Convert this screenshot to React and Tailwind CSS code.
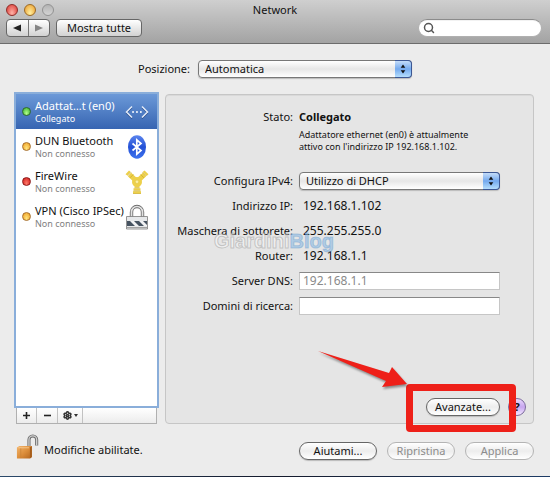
import React, { useState } from 'react';
import { Search, Settings } from 'lucide-react';

const services = [
  { id: 'en0', name: 'Adattat…t (en0)', status: 'Collegato', led: 'green', Icon: EthernetIcon },
  { id: 'dun', name: 'DUN Bluetooth', status: 'Non connesso', led: 'amber', Icon: BluetoothIcon },
  { id: 'fw', name: 'FireWire', status: 'Non connesso', led: 'red', Icon: FireWireIcon },
  { id: 'vpn', name: 'VPN (Cisco IPSec)', status: 'Non connesso', led: 'amber', Icon: VpnIcon },
];

const leds = {
  green: 'border-[#2f6b2a] bg-radial-[at_50%_75%] from-[#b6ff8a] to-[#2fa82a]',
  amber: 'border-[#a8702c] bg-radial-[at_50%_75%] from-[#ffe680] to-[#ef9a1c]',
  red: 'border-[#8c1a1a] bg-radial-[at_50%_75%] from-[#ff7a6a] to-[#cc1414]',
};

function EthernetIcon() {
  return (
    <svg viewBox="0 0 24 24" className="h-6 w-6" fill="none">
      <g stroke="#2c4f8c" strokeWidth="1.2" transform="translate(0 1.2)">
        <path d="M7 6.5 1.5 12 7 17.5M17 6.5l5.5 5.5-5.5 5.5" />
      </g>
      <path d="M7 6.5 1.5 12 7 17.5M17 6.5l5.5 5.5-5.5 5.5" stroke="#e3ebf7" strokeWidth="1.5" />
      <path d="M7.2 12h9.6" stroke="#e3ebf7" strokeWidth="1.8" strokeDasharray="1.7 2.2" />
    </svg>
  );
}

function BluetoothIcon() {
  return (
    <svg viewBox="0 0 24 24" className="h-6 w-6">
      <defs>
        <linearGradient id="bt" x1="0" y1="0" x2="0" y2="1">
          <stop offset="0" stopColor="#5c86ee" />
          <stop offset="0.5" stopColor="#2350d6" />
          <stop offset="1" stopColor="#3f74ee" />
        </linearGradient>
      </defs>
      <ellipse cx="12" cy="12" rx="9" ry="11.8" fill="url(#bt)" />
      <path d="m7.5 8.5 8.5 7-4.2 3.7V4.8L16 8.5l-8.5 7" fill="none" stroke="#fff" strokeWidth="1.7" />
    </svg>
  );
}

function FireWireIcon() {
  return (
    <svg viewBox="0 0 24 24" className="h-6 w-6">
      <g fill="#edd04a">
        <path d="M4.5 4.5 12 11.5l7.500-7" fill="none" stroke="#edd04a" strokeWidth="5" />
        <circle cx="12" cy="12" r="5" />
        <path d="M9.500 15h5v2.500h-5zM8.500 18.300h7v2.200h-7zM8 21.300h8v2.400H8z" />
        <path d="m.5 4.200 3.500-3.700 1.800 1.500-3.500 3.600zM23.500 4.200 19.500.5l-1.800 1.500 4 4z" />
      </g>
      <g stroke="#c09f22" strokeWidth="0.6" fill="none">
        <path d="m2.700 5.700 3.500-3.500M5 7.800l3.500-3.500M21 5.800l-3.500-3.500M18.800 7.800l-3.300-3.500M9.500 17.800h5M8.500 20.900h7" />
        <path d="M8 23.700h8" />
      </g>
      <circle cx="12" cy="11.8" r="1.7" fill="#fbefa4" stroke="#d8ba3a" strokeWidth="0.4" />
    </svg>
  );
}

function VpnIcon() {
  return (
    <svg viewBox="0 0 24 26" className="h-[26px] w-6">
      <path d="M6.500 14V8a5.500 5.500 0 0 1 11 0v6" fill="none" stroke="#6d6d6d" strokeWidth="3.4" />
      <path d="M6.500 14V8a5.500 5.500 0 0 1 11 0v6" fill="none" stroke="#e2e2e2" strokeWidth="1.7" />
      <path d="M1.500 12.500h21v12.500h-21z" fill="#e6e8ea" stroke="#7b7b7b" strokeWidth="0.8" />
      <path d="M2 17h20v5H2z" fill="#465361" />
      <path d="m5 17 5 5h4l-5-5zM14 17l5 5h3v-1l-4-4z" fill="#f1f2f4" />
      <path d="M2 23.500h20" stroke="#a3a3a3" />
    </svg>
  );
}

function PadlockIcon() {
  return (
    <svg viewBox="0 0 24 27" className="h-[26px] w-6">
      <defs>
        <linearGradient id="brass" x1="0" y1="0" x2="1" y2="1">
          <stop offset="0" stopColor="#f3b56c" />
          <stop offset="0.5" stopColor="#dd8f3c" />
          <stop offset="1" stopColor="#b3641c" />
        </linearGradient>
      </defs>
      <path d="M13 14V6a4 4 0 0 1 8 0v6" fill="none" stroke="#6b6b6b" strokeWidth="3.2" />
      <path d="M13 14V6a4 4 0 0 1 8 0v6" fill="none" stroke="#cfcfcf" strokeWidth="1.4" />
      <path d="M.5 14 3 12.500h13V24l-2 1.500H.5z" fill="url(#brass)" />
      <path d="M14 14v11.500L16 24V12.500z" fill="#a65d1b" />
      <path d="M4.500 14.500v10.500" stroke="#c98237" strokeWidth="0.8" />
      <path d="M2 14.300h11" stroke="#f9cf98" strokeWidth="0.8" />
    </svg>
  );
}

function PopUp({ id, options, className }) {
  return (
    <div className={`relative flex ${className}`}>
      <select
        id={id}
        className="h-[18px] w-full appearance-none rounded-sm border border-[#777] bg-linear-to-b from-white via-[#e6e6e6] to-white pr-5 pl-1.5 text-[11px] leading-4 shadow-[0_1px_1px_#bbb]"
      >
        {options.map((o) => (
          <option key={o}>{o}</option>
        ))}
      </select>
      <span className="pointer-events-none absolute inset-y-0 right-0 flex w-[17px] items-center justify-center rounded-r-sm border border-l-0 border-[#3c5794] bg-linear-to-b from-[#c4dcf8] via-[#74a9ee] to-[#b5defc]">
        <svg viewBox="0 0 6 12" className="h-3 w-1.5">
          <path d="M3 1.500 5.300 4.800H.7zM3 10.500.7 7.200h4.600z" fill="#111" />
        </svg>
      </span>
    </div>
  );
}

function PillButton({ className = '', ...props }) {
  return (
    <button
      className={`h-[18px] rounded-full border border-[#666] bg-linear-to-b from-white via-[#ededed] to-white text-[11px] leading-4 shadow-[0_1px_1px_#bbb] disabled:border-[#b4b4b4] disabled:text-[#8c8c8c] disabled:shadow-none ${className}`}
      {...props}
    />
  );
}

function Field({ label, htmlFor, children }) {
  return (
    <>
      {htmlFor ? (
        <label htmlFor={htmlFor} className="text-right">{label}</label>
      ) : (
        <span className="text-right">{label}</span>
      )}
      <div className="min-w-0">{children}</div>
    </>
  );
}

export default function App() {
  const [selected, setSelected] = useState('en0');

  return (
    <div className="flex min-h-screen flex-col bg-[#ececec] font-['Noto_Sans','Open_Sans',sans-serif] text-[11px] leading-4 text-[#111]">
      <header className="border-b border-[#6c6c6c] bg-linear-to-b from-[#cfcfcf] to-[#a3a3a3] pb-1.5">
        <div className="grid h-[19px] grid-cols-[1fr_auto_1fr] items-center">
          <div className="flex gap-1.5 pl-1.5">
            <button aria-label="Chiudi" className="h-3 w-3 rounded-full border border-[#8e2c28] bg-radial-[at_50%_80%] from-[#ffb3a8] to-[#d9332e]" />
            <button aria-label="Riduci" className="h-3 w-3 rounded-full border border-[#9b6a24] bg-radial-[at_50%_80%] from-[#fff0a0] to-[#ea9a2a]" />
            <button aria-label="Ingrandisci" disabled className="h-3 w-3 rounded-full border border-[#929292] bg-linear-to-b from-[#b4b4b4] to-[#d4d4d4]" />
          </div>
          <h1>Network</h1>
        </div>
        <div className="flex items-center pr-2 pl-1.5">
          <div className="flex h-[18px] w-11 rounded-sm border border-[#666] bg-linear-to-b from-white to-[#d2d2d2]">
            <button aria-label="Indietro" className="flex flex-1 items-center justify-center border-r border-[#777]">
              <svg viewBox="0 0 8 8" className="h-2 w-2"><path d="M0 4 8 .5v7z" fill="#222" /></svg>
            </button>
            <button aria-label="Avanti" disabled className="flex flex-1 items-center justify-center">
              <svg viewBox="0 0 8 8" className="h-2 w-2"><path d="M8 4 0 .5v7z" fill="#858585" /></svg>
            </button>
          </div>
          <button className="ml-1.5 h-[18px] w-[86px] rounded-sm border border-[#666] bg-linear-to-b from-white to-[#d2d2d2] leading-4">
            Mostra tutte
          </button>
          <label className="ml-auto flex h-[18px] w-[124px] items-center rounded-full border border-[#b0b0b0] border-t-[#8b8b8b] bg-white px-1 inset-shadow-2xs">
            <Search className="h-3 w-3 shrink-0 text-[#555]" strokeWidth={3} />
            <input aria-label="Cerca" type="text" className="min-w-0 flex-1 outline-none" />
          </label>
        </div>
      </header>

      <main className="flex flex-1 flex-col px-4 pt-4">
        <div className="flex items-center justify-center gap-2">
          <label htmlFor="posizione">Posizione:</label>
          <PopUp id="posizione" options={['Automatica']} className="w-[214px]" />
        </div>

        <div className="mt-4 flex flex-1 gap-2">
          <aside className="flex w-[141px] shrink-0 flex-col">
            <ul className="flex-1 bg-white ring-2 ring-[#8aaeda]">
              {services.map(({ id, name, status, led, Icon }) => (
                <li key={id}>
                  <button
                    onClick={() => setSelected(id)}
                    className={`flex h-[35px] w-full items-center gap-1 pr-2 pl-1.5 text-left ${
                      selected === id ? 'bg-linear-to-b from-[#6c99d8] to-[#3765b2] text-white' : ''
                    }`}
                  >
                    <span className={`h-[9px] w-[9px] shrink-0 rounded-full border ${leds[led]}`} />
                    <span className="min-w-0 flex-1 whitespace-nowrap">
                      <span className="block leading-[14px]">{name}</span>
                      <span className={`block text-[9px] leading-3 ${selected === id ? '' : 'text-[#808080]'}`}>
                        {status}
                      </span>
                    </span>
                    <span className="shrink-0"><Icon /></span>
                  </button>
                </li>
              ))}
            </ul>
            <div className="mt-0.5 flex h-4 border border-t-0 border-[#b0b0b0] bg-linear-to-b from-white to-[#ececec]">
              <button aria-label="Aggiungi" className="flex w-5 items-center justify-center border-r border-[#c2c2c2]">
                <svg viewBox="0 0 7 7" className="h-[7px] w-[7px]"><path d="M0 3.500h7M3.500 0v7" stroke="#222" strokeWidth="1.6" /></svg>
              </button>
              <button aria-label="Rimuovi" className="flex w-[21px] items-center justify-center border-r border-[#c2c2c2]">
                <svg viewBox="0 0 7 7" className="h-[7px] w-[7px]"><path d="M0 3.500h7" stroke="#222" strokeWidth="1.6" /></svg>
              </button>
              <button aria-label="Azioni" className="flex w-[25px] items-center justify-center gap-0.5 border-r border-[#c2c2c2]">
                <Settings className="h-[9px] w-[9px] text-[#333]" strokeWidth={4} />
                <svg viewBox="0 0 4 3" className="h-[3px] w-1"><path d="M0 0h4L2 3z" fill="#333" /></svg>
              </button>
            </div>
          </aside>

          <section className="relative flex flex-1 flex-col rounded-sm border border-[#c6c6c6] bg-[#e5e5e5] pt-3.5 pr-[33px] pb-[7px] inset-shadow-2xs">
            <div className="grid grid-cols-[127px_1fr] items-center gap-x-1.5">
              <Field label="Stato:">
                <strong>Collegato</strong>
              </Field>
              <p className="col-start-2 mt-1 h-[39px] text-[9px] leading-3 whitespace-nowrap">
                Adattatore ethernet (en0) è attualmente<br />
                attivo con l'indirizzo IP 192.168.1.102.
              </p>
            </div>
            <div className="grid auto-rows-[25px] grid-cols-[127px_1fr] items-center gap-x-1.5">
              <Field label="Configura IPv4:" htmlFor="ipv4">
                <PopUp id="ipv4" options={['Utilizzo di DHCP']} className="w-full" />
              </Field>
              <Field label="Indirizzo IP:"><span className="pl-1 text-xs">192.168.1.102</span></Field>
              <Field label="Maschera di sottorete:"><span className="pl-1 text-xs">255.255.255.0</span></Field>
              <Field label="Router:"><span className="pl-1 text-xs">192.168.1.1</span></Field>
              <Field label="Server DNS:" htmlFor="dns">
                <input
                  id="dns"
                  type="text"
                  placeholder="192.168.1.1"
                  className="block h-[18px] w-full border border-[#c6c6c6] border-t-[#888] bg-white px-[3px] text-xs placeholder:text-[#8a8a8a]"
                />
              </Field>
              <Field label="Domini di ricerca:" htmlFor="domini">
                <input
                  id="domini"
                  type="text"
                  className="block h-[18px] w-full border border-[#c6c6c6] border-t-[#888] bg-white px-[3px] text-xs"
                />
              </Field>
            </div>

            <div className="pointer-events-none absolute top-[134px] left-12 font-['Liberation_Sans',sans-serif] text-xl leading-6 font-bold text-white/40 [-webkit-text-stroke:1px_#8e8e8e70]">
              Giardini<span className="text-[#8fbbe4]/60 [-webkit-text-stroke:1px_#6b9ccc70]">Blog</span>
            </div>

            <div className="mt-auto -mr-[26px] flex items-center justify-end gap-2">
              <div className="relative z-10 flex">
                <PillButton className="w-[74px]">Avanzate...</PillButton>
                {/* callout around the button */}
                <div className="pointer-events-none absolute -top-3.5 -right-4 -bottom-4 -left-5 rounded-sm border-7 border-[#ee2019]">
                  <svg viewBox="0 0 94 46" className="absolute right-full bottom-full mr-1 -mb-0.5 h-[46px] w-[94px] drop-shadow-[1px_2px_1px_#0006]">
                    <path d="M3 4 74 26 77 20 92 37 67 40 71 34z" fill="#ee2019" />
                  </svg>
                </div>
              </div>
              <button className="h-[18px] w-[18px] rounded-full border border-[#7b6a9c] bg-linear-to-b from-[#e9d8fb] via-[#c8a6ef] to-[#f4e9ff] leading-4 font-bold">
                ?
              </button>
            </div>
          </section>
        </div>

        <footer className="flex items-center gap-2 pt-2.5 pb-4">
          <div className="flex flex-1 items-center gap-1">
            <PadlockIcon />
            <span className="pt-1.5">Modifiche abilitate.</span>
          </div>
          <div className="flex gap-2.5 pt-2">
            <PillButton className="w-[78px]">Aiutami...</PillButton>
            <PillButton className="w-[68px]" disabled>Ripristina</PillButton>
            <PillButton className="w-[69px]" disabled>Applica</PillButton>
          </div>
        </footer>
      </main>
      <div className="h-px bg-linear-to-r from-[#2b4a6b] via-[#141a2c] to-[#1d3c66]" />
    </div>
  );
}
